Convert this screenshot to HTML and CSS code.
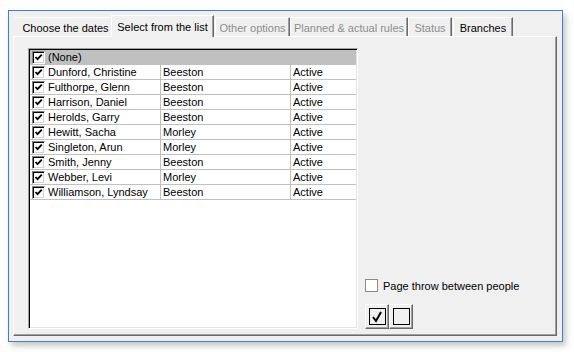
FILE: index.html
```html
<!DOCTYPE html>
<html lang="en">
<head>
  <meta charset="UTF-8">
  <title>Select from the list</title>
  <link rel="stylesheet" href="styles.css">
</head>
<body>
  <div class="window">
    <div class="tabs">
      <div class="tab w-dates">Choose the dates</div>
      <div class="tab active w-list">Select from the list</div>
      <div class="tab disabled w-other">Other options</div>
      <div class="tab disabled w-rules">Planned &amp; actual rules</div>
      <div class="tab disabled w-status">Status</div>
      <div class="tab w-branch">Branches</div>
    </div>
    <div class="panel">
      <div class="list">
        <div class="row head">
          <div class="cell name"><span class="chk"><svg viewBox="0 0 9 9"><path d="M1.5 4 L3.5 6.2 L7.8 1.6" /></svg></span>(None)</div>
        </div>
        <div id="rows"></div>
      </div>
      <div class="side">
        <label class="opt"><span class="box"></span>Page throw between people</label>
        <div class="btns">
          <button class="btn"><span class="glyph"><svg viewBox="0 0 14 14"><path d="M3 7 L6 11 L11 2" /></svg></span></button>
          <button class="btn"><span class="glyph"></span></button>
        </div>
      </div>
    </div>
  </div>

  <script>
    // people shown in the list
    const people = [
      ['Dunford, Christine', 'Beeston', 'Active'],
      ['Fulthorpe, Glenn', 'Beeston', 'Active'],
      ['Harrison, Daniel', 'Beeston', 'Active'],
      ['Herolds, Garry', 'Beeston', 'Active'],
      ['Hewitt, Sacha', 'Morley', 'Active'],
      ['Singleton, Arun', 'Morley', 'Active'],
      ['Smith, Jenny', 'Beeston', 'Active'],
      ['Webber, Levi', 'Morley', 'Active'],
      ['Williamson, Lyndsay', 'Beeston', 'Active']
    ];

    const rows = document.getElementById('rows');
    const tick = '<span class="chk"><svg viewBox="0 0 9 9"><path d="M1.5 4 L3.5 6.2 L7.8 1.6" /></svg></span>';

    people.forEach((p) => {
      const row = document.createElement('div');
      row.className = 'row';
      row.innerHTML = `<div class="cell name">${tick}${p[0]}</div><div class="cell branch">${p[1]}</div><div class="cell status">${p[2]}</div>`;
      rows.appendChild(row);
    });
  </script>
</body>
</html>
```

FILE: styles.css
```css
* {
  margin: 0;
  padding: 0;
  box-sizing: border-box;
  font-family: "Liberation Sans", Arial, sans-serif;
}
body {
  background: #ffffff;
  width: 574px;
  height: 352px;
  overflow: hidden;
}
.window {
  margin: 10px 0 0 8px;
  width: 555px;
  height: 332px;
  background: #f0f0f0;
  border: 1px solid #3c7fd6;
  box-shadow: 3px 4px 6px rgba(0, 0, 0, 0.22);
}

/* tab strip */
.tabs {
  display: flex;
  align-items: flex-end;
  height: 25px;
  margin-left: 5px;
  padding-top: 4px;
  font-size: 11px;
  color: #000;
}
.tab {
  height: 19px;
  line-height: 14px;
  padding-top: 3px;
  text-align: center;
  white-space: nowrap;
  border-top: 1px solid #ffffff;
  border-left: 1px solid #ffffff;
  border-right: 1px solid #696969;
  box-shadow: inset -1px 0 0 #a0a0a0;
  position: relative;
}
.tab.active {
  height: 22px;
  padding-top: 4px;
  margin-bottom: -1px;
  background: #f0f0f0;
  z-index: 2;
}
.tab.disabled {
  color: #8d8d8d;
}
.w-dates { width: 97px; padding-left: 6px; border-left-color: transparent; border-right-color: transparent; box-shadow: none; }
.w-list { width: 103px; }
.w-other { width: 75px; margin-left: 1px; }
.w-rules { width: 118px; }
.w-status { width: 44px; }
.w-branch { width: 60px; margin-left: 1px; }

/* page of the tab control */
.panel {
  display: flex;
  margin-left: 4px;
  width: 544px;
  height: 300px;
  padding: 11px 0 6px 14px;
  border-top: 1px solid #ffffff;
  border-left: 1px solid #ffffff;
  border-right: 1px solid #696969;
  border-bottom: 1px solid #696969;
  box-shadow: inset -1px -1px 0 #a0a0a0;
}

/* list of people */
.list {
  width: 330px;
  height: 281px;
  background: #ffffff;
  border-top: 1px solid #a0a0a0;
  border-left: 1px solid #a0a0a0;
  border-right: 1px solid #ffffff;
  border-bottom: 1px solid #ffffff;
  box-shadow: inset 1px 1px 0 #000000, inset -1px -1px 0 #e3e3e3;
  padding: 1px 0 0 1px;
  font-size: 11px;
}
.row {
  display: flex;
  height: 15px;
  border-bottom: 1px solid #c0c0c0;
  width: 326px;
}
.row.head {
  background: #c0c0c0;
}
.cell {
  display: flex;
  align-items: center;
  height: 14px;
  white-space: nowrap;
}
.cell.name {
  width: 131px;
  padding-left: 2px;
  border-right: 1px solid #c0c0c0;
}
.row.head .cell.name {
  border-right: none;
}
.cell.branch {
  width: 130px;
  padding-left: 2px;
  border-right: 1px solid #c0c0c0;
}
.cell.status {
  padding-left: 2px;
}
.chk {
  display: inline-flex;
  align-items: center;
  justify-content: center;
  width: 13px;
  height: 13px;
  margin-right: 3px;
  background: #ffffff;
  border-top: 1px solid #808080;
  border-left: 1px solid #808080;
  border-right: 1px solid #ffffff;
  border-bottom: 1px solid #ffffff;
  box-shadow: inset 1px 1px 0 #000000, inset -1px -1px 0 #d4d4d4;
}
.chk svg {
  width: 9px;
  height: 9px;
  fill: none;
  stroke: #000;
  stroke-width: 1.8;
}

/* right hand options */
.side {
  display: flex;
  flex-direction: column;
  justify-content: flex-end;
  margin-left: 7px;
  height: 281px;
}
.opt {
  display: flex;
  align-items: center;
  font-size: 11px;
  height: 13px;
  margin-bottom: 12px;
}
.box {
  width: 13px;
  height: 13px;
  margin-right: 5px;
  background: #ffffff;
  border: 1px solid #8a8a8a;
}
.btns {
  display: flex;
}
.btn {
  width: 24px;
  height: 25px;
  background: #f0f0f0;
  border-top: 1px solid #ffffff;
  border-left: 1px solid #ffffff;
  border-right: 1px solid #696969;
  border-bottom: 1px solid #696969;
  box-shadow: inset -1px -1px 0 #a0a0a0;
  display: flex;
  align-items: center;
  justify-content: center;
}
.glyph {
  width: 17px;
  height: 17px;
  border: 1px solid #000;
  background: #f0f0f0;
  display: flex;
  align-items: center;
  justify-content: center;
}
.glyph svg {
  width: 14px;
  height: 14px;
  fill: none;
  stroke: #000;
  stroke-width: 2;
}
```
